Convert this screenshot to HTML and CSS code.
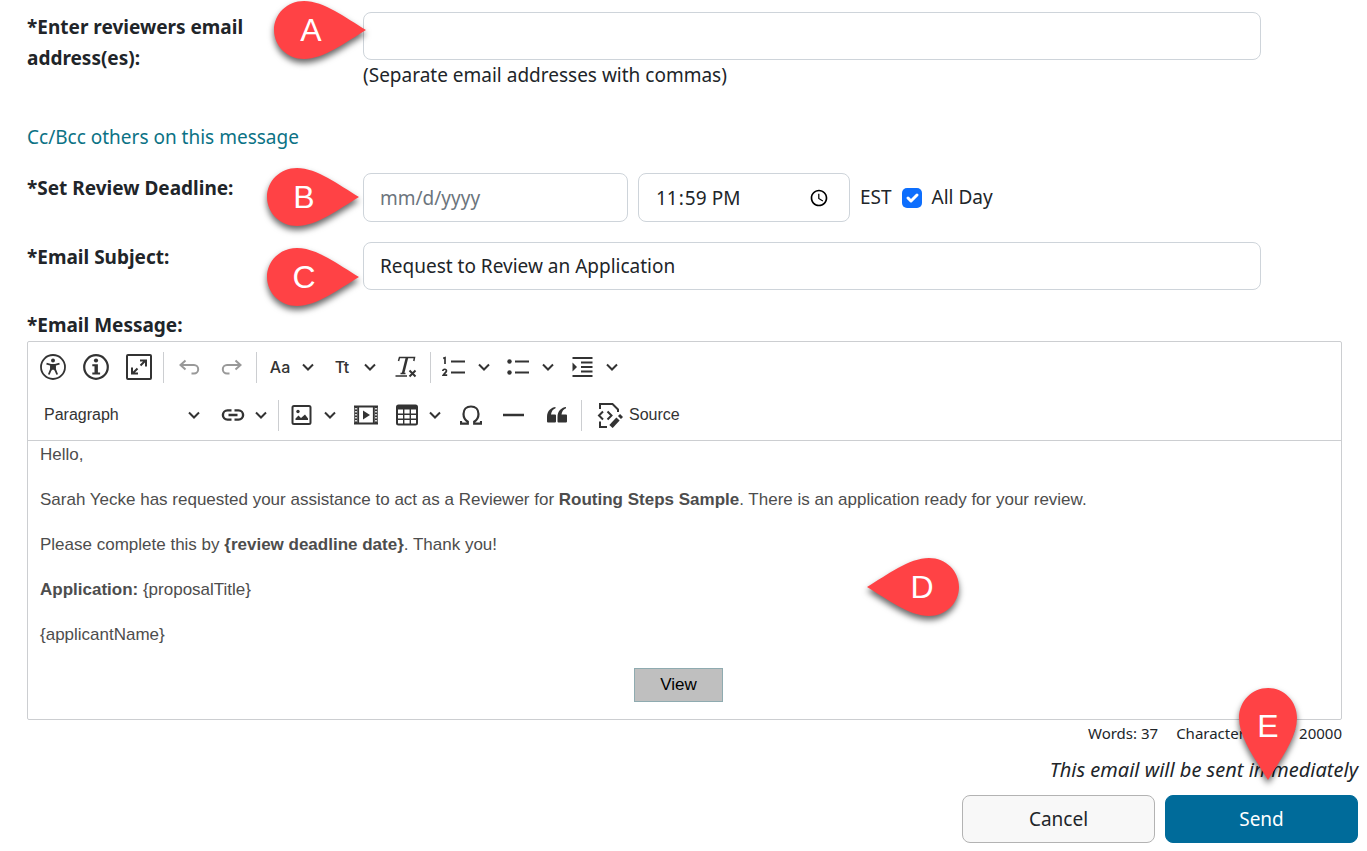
FILE: index.html
```html
<!DOCTYPE html>
<html lang="en">
<head>
    <meta charset="UTF-8">
    <meta name="viewport" content="width=device-width, initial-scale=1.0">
    <title>Request Review</title>
    <link rel="stylesheet" href="styles.css">
</head>
<body>

<!-- shared shapes -->
<svg class="defs" aria-hidden="true">
    <symbol id="chevron" viewBox="0 0 12 12">
        <path d="M1 3.5l5 5 5-5" fill="none" stroke="#333" stroke-width="2"/>
    </symbol>
    <symbol id="pin-right" viewBox="0 0 92 58">
        <path d="M92 29C72 17 50 0 30 0C13 0 0 13 0 29S13 58 30 58C50 58 72 41 92 29Z" fill="#ff4245"/>
    </symbol>
    <symbol id="pin-left" viewBox="0 0 92 58">
        <path d="M0 29C20 17 42 0 62 0C79 0 92 13 92 29S79 58 62 58C42 58 20 41 0 29Z" fill="#ff4245"/>
    </symbol>
    <symbol id="pin-down" viewBox="0 0 58 92">
        <path d="M29 92C17 72 0 50 0 30C0 13 13 0 29 0S58 13 58 30C58 50 41 72 29 92Z" fill="#ff4245"/>
    </symbol>
</svg>

<form class="review-form">
    <div class="row row-emails">
        <label class="label" for="emails">*Enter reviewers email address(es):</label>
        <div class="field">
            <input class="input" type="text" id="emails">
            <div class="hint">(Separate email addresses with commas)</div>
            <div class="marker marker-a"><svg><use href="#pin-right"/></svg><span>A</span></div>
        </div>
    </div>

    <a class="cc-link" href="#">Cc/Bcc others on this message</a>

    <div class="row">
        <label class="label" for="deadline">*Set Review Deadline:</label>
        <div class="field deadline">
            <input class="input date" type="text" id="deadline" placeholder="mm/d/yyyy">
            <input class="input time" type="time" value="23:59" aria-label="Time">
            <span class="zone">EST</span>
            <input class="check" type="checkbox" id="allday" checked>
            <label for="allday">All Day</label>
            <div class="marker marker-b"><svg><use href="#pin-right"/></svg><span>B</span></div>
        </div>
    </div>

    <div class="row">
        <label class="label" for="subject">*Email Subject:</label>
        <div class="field">
            <input class="input" type="text" id="subject" value="Request to Review an Application">
            <div class="marker marker-c"><svg><use href="#pin-right"/></svg><span>C</span></div>
        </div>
    </div>

    <div class="label" id="message-label">*Email Message:</div>

    <div class="editor">
        <div class="toolbar">
            <div class="tools">
                <button type="button" class="tool" aria-label="Accessibility">
                    <svg width="26" height="26" viewBox="0 0 26 26" fill="none" stroke="#333">
                        <circle cx="13" cy="13" r="12" stroke-width="1.8"/>
                        <circle cx="13" cy="6.6" r="2" fill="#333" stroke="none"/>
                        <path d="M6.5 9.6l4.5 1.3v4.3L8.8 20.5M19.5 9.6L15 10.9v4.3l2.2 5.3" stroke-width="1.8"/>
                        <path d="M11 10.5h4v5.5l-2-1-2 1z" fill="#333" stroke-width="1"/>
                    </svg>
                </button>
                <button type="button" class="tool" aria-label="Info">
                    <svg width="26" height="26" viewBox="0 0 26 26">
                        <circle cx="13" cy="13" r="11.8" fill="none" stroke="#333" stroke-width="2.2"/>
                        <circle cx="13" cy="6.5" r="2.1" fill="#333"/>
                        <path d="M9.3 10.2h5.6v8.4h2.2v2H9.3v-2h2.2v-6.4H9.3z" fill="#333"/>
                    </svg>
                </button>
                <button type="button" class="tool" aria-label="Maximize">
                    <svg width="26" height="26" viewBox="0 0 26 26" fill="none" stroke="#333" stroke-width="2">
                        <rect x="1" y="1" width="24" height="24" rx="1"/>
                        <path d="M14.5 11.5l5-5M14 6.5h6v6M11.5 14.5l-5 5M6 13.5v6h6"/>
                    </svg>
                </button>
                <span class="sep"></span>
                <button type="button" class="tool" aria-label="Undo" disabled>
                    <svg width="22" height="18" viewBox="0 0 22 18" fill="none" stroke="#999" stroke-width="2">
                        <path d="M7.5 2.5L2.500 7l5 4.500M2.500 7h13.500a4.200 4.200 0 0 1 0 8.400h-2.500"/>
                    </svg>
                </button>
                <button type="button" class="tool" aria-label="Redo" disabled>
                    <svg width="22" height="18" viewBox="0 0 22 18" fill="none" stroke="#999" stroke-width="2">
                        <path d="M14.500 2.500l5 4.500-5 4.500M19.500 7H6a4.200 4.200 0 0 0 0 8.400h2.500"/>
                    </svg>
                </button>
                <span class="sep"></span>
                <button type="button" class="tool drop" aria-label="Font family">
                    <span class="glyph">Aa</span>
                    <svg class="chevron"><use href="#chevron"/></svg>
                </button>
                <button type="button" class="tool drop" aria-label="Font size">
                    <span class="glyph">Tt</span>
                    <svg class="chevron"><use href="#chevron"/></svg>
                </button>
                <button type="button" class="tool" aria-label="Remove format">
                    <svg width="22" height="22" viewBox="0 0 22 22" fill="none" stroke="#333">
                        <path d="M3.500 5l1-3.500h15L18.800 5" stroke-width="1.500"/>
                        <path d="M12 1.500L8 17.500" stroke-width="2.600"/>
                        <path d="M5.500 17.500h5M.5 20h11.500" stroke-width="1.400"/>
                        <path d="M14.500 14.500l6 6M20.500 14.500l-6 6" stroke-width="2"/>
                    </svg>
                </button>
                <span class="sep"></span>
                <button type="button" class="tool drop list" aria-label="Numbered list">
                    <svg width="24" height="22" viewBox="0 0 24 22" fill="none" stroke="#333">
                        <path d="M9 5.500h14M9 16.500h14" stroke-width="2"/>
                        <path d="M1.200 2.400l1.800-.6v6.200M.8 15c.3-2.400 4-2.200 3.600 0-.2 1.300-2 2.300-3.200 4.200h4" stroke-width="1.700"/>
                    </svg>
                    <svg class="chevron"><use href="#chevron"/></svg>
                </button>
                <button type="button" class="tool drop list" aria-label="Bulleted list">
                    <svg width="24" height="22" viewBox="0 0 24 22">
                        <path d="M9 5.500h14M9 16.500h14" stroke="#333" stroke-width="2"/>
                        <circle cx="3.500" cy="5.500" r="2.200" fill="#333"/>
                        <circle cx="3.500" cy="16.500" r="2.200" fill="#333"/>
                    </svg>
                    <svg class="chevron"><use href="#chevron"/></svg>
                </button>
                <button type="button" class="tool drop list" aria-label="Indent">
                    <svg width="24" height="22" viewBox="0 0 24 22">
                        <path d="M2.500 2h20M11 6.500h11.500M11 11h11.500M11 15.500h11.500M2.500 20h20" stroke="#333" stroke-width="2"/>
                        <path d="M2.500 6.500L7 11l-4.500 4.500z" fill="#333"/>
                    </svg>
                    <svg class="chevron"><use href="#chevron"/></svg>
                </button>
            </div>
            <div class="tools">
                <button type="button" class="tool heading">
                    <span>Paragraph</span>
                    <svg class="chevron"><use href="#chevron"/></svg>
                </button>
                <button type="button" class="tool drop" aria-label="Link">
                    <svg width="24" height="14" viewBox="0 0 24 14" fill="none" stroke="#333" stroke-width="2.400">
                        <path d="M10.500 2.400H6.500a4.600 4.600 0 0 0 0 9.200h4M13.500 2.400h4a4.600 4.600 0 0 1 0 9.200h-4M7.500 7h9"/>
                    </svg>
                    <svg class="chevron"><use href="#chevron"/></svg>
                </button>
                <span class="sep"></span>
                <button type="button" class="tool drop" aria-label="Image">
                    <svg width="24" height="20" viewBox="0 0 24 20">
                        <rect x="2.500" y="1" width="18" height="18" rx="1.500" fill="none" stroke="#333" stroke-width="2"/>
                        <circle cx="8" cy="6.500" r="1.700" fill="#333"/>
                        <path d="M5.500 15v-1.500l3-3 2.500 2.500 4-3.500 3 4V15z" fill="#333"/>
                    </svg>
                    <svg class="chevron"><use href="#chevron"/></svg>
                </button>
                <button type="button" class="tool" aria-label="Media">
                    <svg width="24" height="20" viewBox="0 0 24 20" fill="none" stroke="#333">
                        <path d="M0 1.500h24M0 18.500h24" stroke-width="2"/>
                        <path d="M2 2v16M22 2v16" stroke-width="3.500"/>
                        <path d="M2 3v15M22 3v15" stroke="#fff" stroke-width="1.600" stroke-dasharray="1.500 1.500"/>
                        <path d="M4.500 2v16M19.500 2v16" stroke-width="1.200"/>
                        <path d="M9 5.500l7 4.500-7 4.500z" fill="#333" stroke="none"/>
                    </svg>
                </button>
                <button type="button" class="tool drop" aria-label="Table">
                    <svg width="24" height="22" viewBox="0 0 24 22">
                        <rect x="2" y="1.500" width="20" height="19" rx="1.500" fill="none" stroke="#333" stroke-width="2"/>
                        <path d="M2 1h20v4.500H2z" fill="#333"/>
                        <path d="M8.700 5v15M15.300 5v15M2 10.200h20M2 15.200h20" stroke="#333" stroke-width="1.400"/>
                    </svg>
                    <svg class="chevron"><use href="#chevron"/></svg>
                </button>
                <button type="button" class="tool" aria-label="Special characters">
                    <svg width="22" height="20" viewBox="0 0 22 20">
                        <path d="M1 16v2.700h6.800v-2C4.800 14.800 3.500 12 3.500 9 3.500 4.500 6.500 1.500 11 1.500S18.500 4.500 18.500 9c0 3-1.300 5.800-4.300 7.700v2H21V16" fill="none" stroke="#333" stroke-width="2.200"/>
                    </svg>
                </button>
                <button type="button" class="tool" aria-label="Horizontal line">
                    <svg width="22" height="20" viewBox="0 0 22 20"><path d="M0 10h21" stroke="#333" stroke-width="2.500"/></svg>
                </button>
                <button type="button" class="tool" aria-label="Block quote">
                    <svg width="20" height="18" viewBox="0 0 20 18" fill="#333">
                        <path d="M8.500 1C4.500 1.500 0 4.500 0 11v4.500q0 1 1 1h7q1 0 1-1V9.500q0-1-1-1H4C4.300 5.500 6 3 8.500 2.200z"/>
                        <path d="M19 1c-4 .5-8.500 3.500-8.500 10v4.500q0 1 1 1h7.500q1 0 1-1V9.500q0-1-1-1h-4.500C14.800 5.500 16.500 3 19 2.200z"/>
                    </svg>
                </button>
                <span class="sep"></span>
                <button type="button" class="tool source">
                    <svg width="26" height="26" viewBox="0 0 26 26" fill="none" stroke="#333" stroke-width="2">
                        <path d="M3 7V2h12.500l5.500 5.500V10M3 19.500V25h7"/>
                        <path d="M6 9.500L2 13.500l4 4M10.500 9.500l4 4-4 4"/>
                        <path d="M14 24.500l7-7.500" stroke-width="4.500"/>
                        <path d="M22 13l3 3" stroke-width="3"/>
                    </svg>
                    <span>Source</span>
                </button>
            </div>
        </div>
        <div class="message" contenteditable="true" role="textbox" aria-labelledby="message-label" spellcheck="false">
            <p>Hello,</p>
            <p>Sarah Yecke has requested your assistance to act as a Reviewer for <strong>Routing Steps Sample</strong>. There is an application ready for your review.</p>
            <p>Please complete this by <strong>{review deadline date}</strong>. Thank you!</p>
            <p><strong>Application:</strong> {proposalTitle}</p>
            <p>{applicantName}</p>
            <button type="button" class="view">View</button>
        </div>
        <div class="marker marker-d"><svg><use href="#pin-left"/></svg><span>D</span></div>
    </div>

    <div class="counts"><span>Words: 37</span><span>Characters: 230 / 20000</span></div>

    <div class="footer">
        <em class="note">This email will be sent immediately</em>
        <button type="button" class="btn cancel">Cancel</button>
        <button type="submit" class="btn send">Send</button>
        <div class="marker marker-e"><svg><use href="#pin-down"/></svg><span>E</span></div>
    </div>
</form>

</body>
</html>
```

FILE: styles.css
```css
* {
    box-sizing: border-box;
}
body {
    margin: 0;
    font-family: "Noto Sans", "Open Sans", sans-serif;
    font-size: 19px;
    line-height: 31px;
    color: #212529;
    background: #fff;
}
input, button {
    font-family: inherit;
    font-size: inherit;
    color: inherit;
}
.defs {
    display: none;
}
.review-form {
    padding: 12px 25px 8px 27px;
}

/* form rows */
.row {
    display: grid;
    grid-template-columns: 336px 1fr;
    padding-right: 81px;
    margin-bottom: 20px;
}
.row-emails {
    margin-bottom: 31px;
}
.label {
    font-weight: bold;
}
.row .label {
    max-width: 240px;
}
.field {
    position: relative;
}
.input {
    display: block;
    width: 100%;
    height: 48px;
    padding: 0 16px;
    border: 1px solid #ced4da;
    border-radius: 8px;
    background: #fff;
}
.input::placeholder {
    color: #6c757d;
}
.cc-link {
    display: block;
    margin-bottom: 20px;
    color: #0b7285;
    text-decoration: none;
}
.deadline {
    display: flex;
    align-items: center;
    gap: 10px;
}
.deadline .input {
    height: 49px;
}
.date {
    width: 265px;
}
.time {
    width: 212px;
    padding-right: 20px;
}
.time::-webkit-calendar-picker-indicator {
    width: 20px;
    height: 20px;
    padding: 0;
}
.check {
    appearance: none;
    width: 20px;
    height: 20px;
    margin: 0;
    border-radius: 5px;
    background: #0d6efd url("data:image/svg+xml,%3Csvg xmlns='http://www.w3.org/2000/svg' viewBox='0 0 20 20'%3E%3Cpath fill='none' stroke='%23fff' stroke-width='3' stroke-linecap='round' stroke-linejoin='round' d='M6 10l3 3 6-6'/%3E%3C/svg%3E");
}

/* editor */
.editor {
    position: relative;
    border: 1px solid #ccced1;
    border-radius: 2px;
    font-family: "Liberation Sans", Arial, sans-serif;
}
.toolbar {
    padding: 1px 3px;
    border-bottom: 1px solid #ccced1;
}
.tools {
    display: flex;
    flex-wrap: wrap;
    align-items: center;
    min-height: 48px;
}
.tool {
    display: flex;
    align-items: center;
    justify-content: center;
    width: 43px;
    height: 40px;
    padding: 0;
    border: none;
    background: none;
    font-size: 16px;
    color: #333;
}
.tool.drop {
    justify-content: flex-start;
    gap: 10px;
    width: 62px;
    padding-left: 8px;
}
.tool.list {
    gap: 12px;
    width: 64px;
}
.tool.heading {
    justify-content: space-between;
    width: 182px;
    padding: 0 13px;
}
.tool.source {
    gap: 6px;
    width: auto;
    padding: 0 12px;
}
.glyph {
    width: 24px;
    font-family: Inter, sans-serif;
    font-weight: 500;
    text-align: center;
}
.chevron {
    width: 12px;
    height: 12px;
}
.sep {
    width: 1px;
    height: 31px;
    margin: 0 3px;
    background: #ccced1;
}
.message {
    padding: 1px 24px 17px 12px;
    font-size: 17px;
    line-height: 26px;
    color: #4d4d4d;
    outline: none;
}
.message p {
    margin: 0 0 19px;
}
.view {
    display: block;
    width: 89px;
    height: 34px;
    margin: 20px auto 0;
    border: 1px solid #8fabb0;
    background: #bfbfbf;
    color: #000;
}
.counts {
    display: flex;
    justify-content: flex-end;
    gap: 18px;
    font-size: 15px;
    line-height: 26px;
}

/* footer */
.footer {
    position: relative;
    display: flex;
    flex-wrap: wrap;
    justify-content: flex-end;
    gap: 10px;
    margin: 8px -16px 0 0;
}
.note {
    width: 100%;
    font-size: 20px;
    text-align: right;
}
.btn {
    width: 193px;
    height: 48px;
    border: 1px solid #b3b3b3;
    border-radius: 8px;
    background: #f8f8f8;
}
.send {
    border-color: #006b9a;
    background: #006b9a;
    color: #fff;
}

/* lettered markers */
.marker {
    position: absolute;
    display: flex;
    align-items: center;
    justify-content: center;
    width: 92px;
    height: 58px;
    font-family: "Liberation Sans", Arial, sans-serif;
    font-size: 32px;
    color: #fff;
}
.marker svg {
    position: absolute;
    top: 0;
    left: 0;
    width: 100%;
    height: 100%;
    overflow: visible;
    filter: drop-shadow(0 4px 3px rgba(0, 0, 0, 0.6));
}
.marker span {
    position: relative;
}
.marker-a {
    top: -11px;
    left: -89px;
    padding-right: 18px;
}
.marker-b {
    top: -5px;
    left: -96px;
    padding-right: 18px;
}
.marker-c {
    top: 6px;
    left: -96px;
    padding-right: 18px;
}
.marker-d {
    top: 216px;
    left: 839px;
    padding-left: 18px;
}
.marker-e {
    top: -66px;
    right: 61px;
    width: 58px;
    height: 92px;
    padding-bottom: 16px;
}
```
